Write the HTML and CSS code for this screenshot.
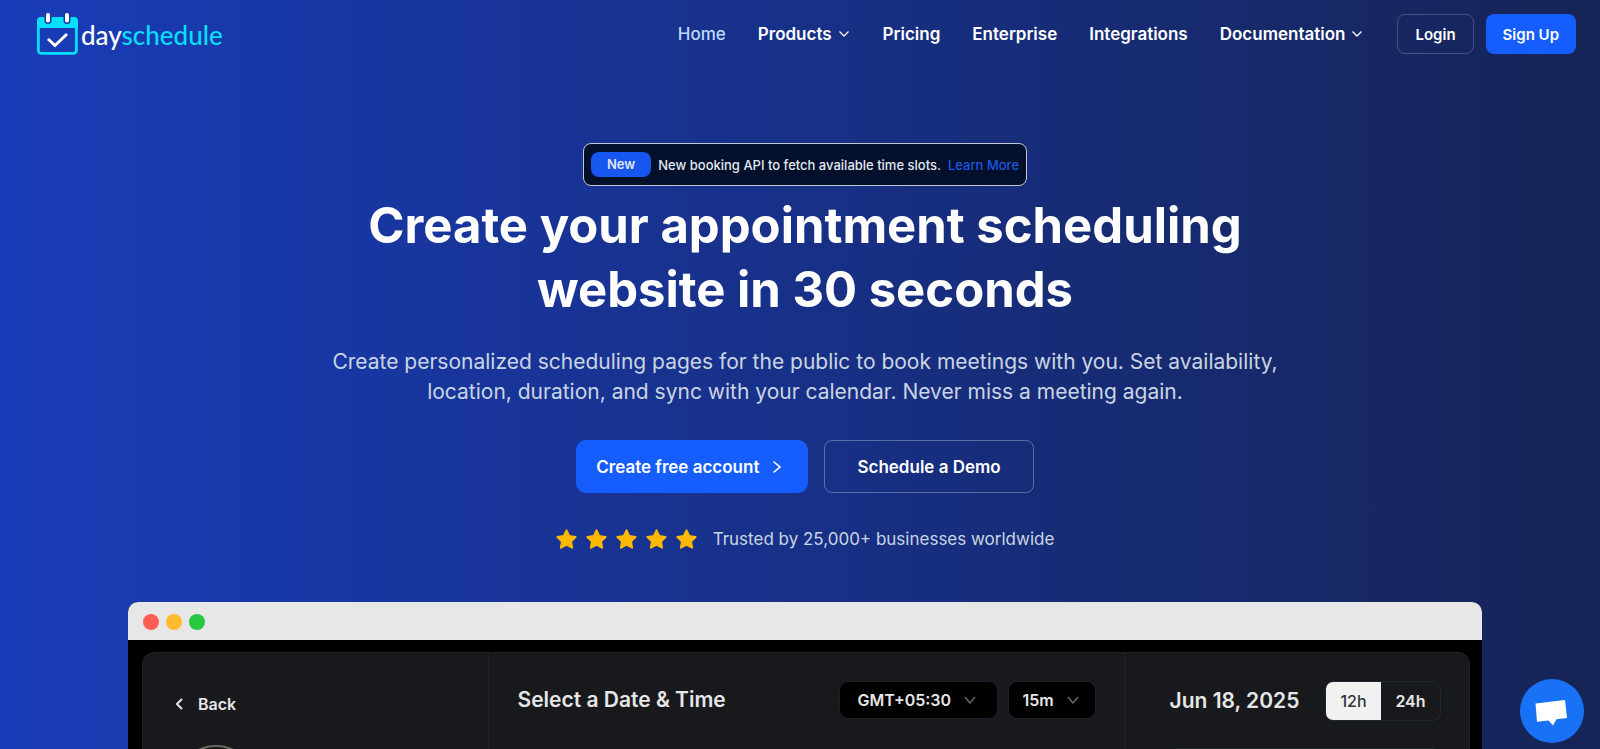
FILE: index.html
```html
<!DOCTYPE html>
<html lang="en">
<head>
<meta charset="utf-8">
<meta name="viewport" content="width=device-width, initial-scale=1">
<title>DaySchedule</title>
<link rel="stylesheet" href="styles.css">
</head>
<body>
<header class="site-header">
  <a class="logo" href="#" aria-label="dayschedule">
    <svg class="logo-mark" viewBox="0 0 41 42" aria-hidden="true">
      <rect x="1.4" y="5.4" width="38" height="35" rx="3" fill="none" stroke="#06dff9" stroke-width="2.8"/>
      <path d="M0 8a4 4 0 0 1 4-4h33a4 4 0 0 1 4 4v7H0z" fill="#06dff9"/>
      <rect x="7.500" y="-1" width="7" height="12" rx="3.500" fill="#1a39ae"/>
      <rect x="26.500" y="-1" width="7" height="12" rx="3.500" fill="#1a39ae"/>
      <rect x="9" y="0" width="4" height="9.500" rx="2" fill="#fff"/>
      <rect x="28" y="0" width="4" height="9.500" rx="2" fill="#fff"/>
      <path d="M11 26l7 6.500L30 21" fill="none" stroke="#fff" stroke-width="3"/>
    </svg>
    <span class="logo-text">day<span class="logo-accent">schedule</span></span>
  </a>
  <nav class="main-nav" aria-label="Main">
    <a class="active" href="#">Home</a>
    <a href="#">Products <svg class="caret" viewBox="0 0 10 6" aria-hidden="true"><path d="M.5.5L5 5 9.500.5"/></svg></a>
    <a href="#">Pricing</a>
    <a href="#">Enterprise</a>
    <a href="#">Integrations</a>
    <a href="#">Documentation <svg class="caret" viewBox="0 0 10 6" aria-hidden="true"><path d="M.5.5L5 5 9.500.5"/></svg></a>
  </nav>
  <div class="auth">
    <a class="btn-small btn-outline" href="#">Login</a>
    <a class="btn-small btn-primary" href="#">Sign Up</a>
  </div>
</header>

<main class="hero">
  <div class="announcement">
    <span class="pill">New</span>
    <span>New booking API to fetch available time slots.</span>
    <a href="#">Learn More</a>
  </div>
  <h1>Create your appointment scheduling website in 30 seconds</h1>
  <p class="lead">Create personalized scheduling pages for the public to book meetings with you. Set availability, location, duration, and sync with your calendar. Never miss a meeting again.</p>
  <div class="actions">
    <a class="btn btn-primary" href="#">Create free account <svg class="arrow" viewBox="0 0 8 12" aria-hidden="true"><path d="M1 1l6 5-6 5"/></svg></a>
    <a class="btn btn-outline btn-demo" href="#">Schedule a Demo</a>
  </div>
  <div class="rating">
    <svg width="0" height="0" class="defs" aria-hidden="true"><symbol id="star" viewBox="0 0 20 20"><path d="M10 1.300l2.600 5.500 6 .8-4.400 4.200 1.100 6L10 14.900l-5.300 2.900 1.100-6L1.400 7.600l6-.8z" fill="#ffb900" stroke="#ffb900" stroke-width="2" stroke-linejoin="round"/></symbol></svg>
    <div class="stars" role="img" aria-label="5 stars">
      <svg><use href="#star"/></svg><svg><use href="#star"/></svg><svg><use href="#star"/></svg><svg><use href="#star"/></svg><svg><use href="#star"/></svg>
    </div>
    <span>Trusted by 25,000+ businesses worldwide</span>
  </div>

  <section class="window" aria-label="Booking page preview">
    <div class="titlebar"><i class="dot red"></i><i class="dot yellow"></i><i class="dot green"></i></div>
    <div class="window-body">
      <div class="panel">
        <div class="col-profile">
          <button class="back" type="button"><svg viewBox="0 0 7 12" aria-hidden="true"><path d="M6 1L1 6l5 5"/></svg>Back</button>
          <div class="avatar"></div>
        </div>
        <div class="col-calendar">
          <h2>Select a Date &amp; Time</h2>
          <div class="pickers">
            <div class="picker picker-zone">
              <select aria-label="Time zone"><option>GMT+05:30</option></select>
              <svg viewBox="0 0 12 8" aria-hidden="true"><path d="M1 1l5 6 5-6"/></svg>
            </div>
            <div class="picker picker-length">
              <select aria-label="Duration"><option>15m</option></select>
              <svg viewBox="0 0 12 8" aria-hidden="true"><path d="M1 1l5 6 5-6"/></svg>
            </div>
          </div>
        </div>
        <div class="col-slots">
          <div class="slots-head">
            <h2>Jun 18, 2025</h2>
            <div class="toggle"><button class="on" type="button">12h</button><button type="button">24h</button></div>
          </div>
          <div class="slot"></div>
        </div>
      </div>
    </div>
  </section>
</main>

<button class="chat" type="button" aria-label="Open chat">
  <svg viewBox="0 0 64 64" aria-hidden="true"><path d="M15.500 24.500L45 21l2 18-10.500 1.300L33 46.500 28.500 41.500 17 42.800z" fill="#fff"/></svg>
</button>
</body>
</html>
```

FILE: styles.css
```css
* { box-sizing: border-box; }

body {
  margin: 0;
  height: 100vh;
  overflow: hidden;
  font-family: Inter, "Liberation Sans", sans-serif;
  color: #fff;
  background: linear-gradient(to right, #193cb8, #162456);
}

a { color: inherit; text-decoration: none; }
button, select { font: inherit; color: inherit; }
h1, h2, p { margin: 0; }

.site-header {
  display: flex;
  align-items: center;
  height: 68px;
  padding: 0 24px 0 37px;
}
.logo { display: flex; align-items: center; gap: 3px; margin-right: auto; }
.logo-mark { width: 41px; height: 42px; }
.logo-text { font-family: Lato, Inter, sans-serif; font-size: 26px; line-height: 32px; font-weight: 500; padding-top: 2px; }
.logo-accent { color: #06dff9; }

.main-nav { display: flex; gap: 32px; font-size: 17px; line-height: 24px; font-weight: 600; }
.main-nav a { display: flex; align-items: center; gap: 7px; }
.main-nav .active { color: #bedbff; font-weight: 500; }
.caret { width: 10px; height: 6px; margin-right: 2px; fill: none; stroke: #fff; stroke-width: 1.3; overflow: visible; }

.auth { display: flex; gap: 12px; margin-left: 33px; }
.btn-small {
  display: flex; align-items: center; justify-content: center;
  height: 40px; padding: 0 17px;
  border-radius: 8px; font-size: 15px; font-weight: 600;
}
.btn-primary { background: #155dfc; }
.btn-outline { border: 1px solid rgba(255, 255, 255, .2); }

.hero {
  display: flex; flex-direction: column; align-items: center;
  padding: 75px 118px 0 128px;
}
.announcement {
  display: flex; align-items: center; gap: 7px;
  height: 43px; padding: 0 7px;
  border: 1px solid #c3c7d4; border-radius: 8px;
  background: #02102b; color: #e2e8f0;
  font-size: 13px; font-weight: 500;
}
.announcement a { color: #1d56e0; }
.pill { padding: 0 16px; border-radius: 8px; background: #1757ef; line-height: 25px; font-weight: 600; }

h1 { max-width: 900px; margin-top: 8px; text-align: center; font-size: 49px; line-height: 64px; font-weight: 700; }
.lead { max-width: 960px; margin-top: 25px; text-align: center; font-size: 21px; line-height: 30px; color: #cad5e2; }

.actions { display: flex; gap: 16px; margin-top: 33px; }
.btn {
  display: flex; align-items: center; gap: 14px;
  height: 53px; padding: 0 27px 0 20px;
  border-radius: 10px; font-size: 17px; font-weight: 600;
}
.btn-demo { padding: 0 32px; border-radius: 8px; border-color: rgba(255, 255, 255, .3); }
.arrow { width: 8px; height: 12px; fill: none; stroke: #fff; stroke-width: 1.6; stroke-linecap: round; }

.rating { display: flex; align-items: center; gap: 16px; height: 24px; margin-top: 34px; font-size: 17px; line-height: 24px; color: #cad5e2; }
.defs { position: absolute; }
.stars { display: flex; gap: 9px; }
.stars svg { width: 21px; height: 21px; }

.window { width: 100%; margin-top: 51px; border-radius: 10px 10px 0 0; overflow: hidden; background: #000; }
.titlebar { display: flex; align-items: center; gap: 7px; height: 38px; padding: 2px 15px 0; background: #e7e7e7; }
.dot { width: 16px; height: 16px; border-radius: 50%; }
.red { background: #ff5c54; }
.yellow { background: #ffbb2c; }
.green { background: #26c840; }
.window-body { padding: 12px 12px 0 14px; }
.panel {
  display: grid; grid-template-columns: 346fr 637fr 345fr;
  min-height: 400px;
  border: 1px solid #222326; border-radius: 12px;
  background: #18191d; color: #e6e6e6;
}
.col-profile { padding: 38px 33px; }
.back { display: flex; align-items: center; gap: 15px; padding: 0; border: 0; background: none; font-size: 16px; line-height: 26px; font-weight: 600; }
.back svg { width: 7px; height: 12px; fill: none; stroke: currentColor; stroke-width: 2; }
.avatar { width: 80px; height: 80px; margin-top: 28px; border: 2px solid #66665f; border-radius: 50%; background: #15150f; }

.col-calendar {
  display: flex; align-items: flex-start; justify-content: space-between;
  padding: 28px; border: solid #222326; border-width: 0 1px;
}
h2 { font-size: 21px; line-height: 38px; font-weight: 600; }
.pickers { display: flex; gap: 10px; }
.picker { display: flex; align-items: center; position: relative; }
.picker select {
  appearance: none; width: 100%; height: 38px; padding: 0 18px;
  border: 1px solid #18222a; border-radius: 9px; background: #000;
  font-size: 16px; font-weight: 600;
}
.picker svg { position: absolute; right: 22px; width: 12px; height: 8px; fill: none; stroke: #666; stroke-width: 1.5; }
.picker-zone { width: 159px; }
.picker-length { width: 88px; }
.picker-length select { padding: 0 14px; }
.picker-length svg { right: 17px; }

.col-slots { padding: 28px 28px 28px 45px; }
.slots-head { display: flex; align-items: center; justify-content: space-between; }
.toggle { display: flex; height: 40px; border: 1px solid #1c272f; border-radius: 8px; overflow: hidden; }
.toggle button { width: 59px; padding: 0; border: 0; background: none; font-size: 16px; font-weight: 600; }
.toggle .on { width: 55px; background: #f1f1f1; color: #33343a; font-weight: 500; }
.slot { height: 44px; margin-top: 27px; border: 1px solid #1f2b33; border-radius: 8px; }

.chat {
  position: fixed; right: 16px; bottom: 6px;
  width: 64px; height: 64px; padding: 0;
  border: 0; border-radius: 50%; background: #1972f5;
}
.chat svg { display: block; width: 64px; height: 64px; }
```
